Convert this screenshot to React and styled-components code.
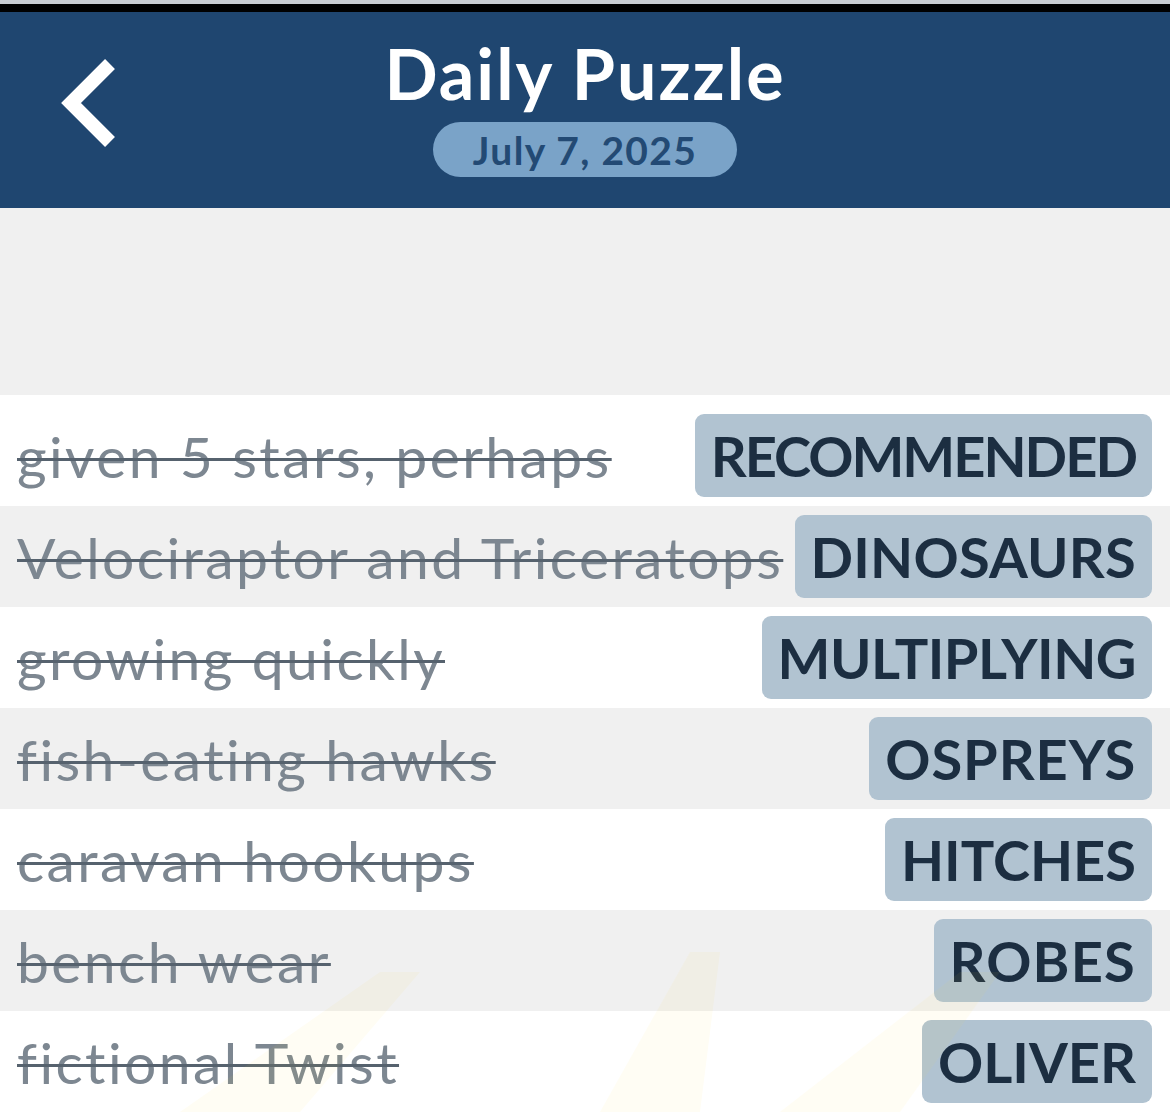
import React from 'react';
import styled, { createGlobalStyle } from 'styled-components';

const GlobalStyle = createGlobalStyle`
    body {
        margin: 0;
        background: #f0f0f0;
        font-family: "Lato", "Noto Sans", sans-serif;
    }
`;

const Page = styled.div`
    position: relative;
    width: 1170px;
    height: 1112px;
    overflow: hidden;
    background: #f0f0f0;
`;

const StatusStrip = styled.div`
    height: 4px;
    background: #c9cdd2;
    border-bottom: 8px solid #000000;
`;

const Header = styled.header`
    position: relative;
    height: 196px;
    background: #1f4670;
    display: flex;
    flex-direction: column;
    align-items: center;
`;

const BackButton = styled.button`
    position: absolute;
    left: 56px;
    top: 40px;
    width: 66px;
    height: 102px;
    padding: 0;
    border: none;
    background: none;
    cursor: pointer;
`;

const Title = styled.h1`
    margin: 24px 0 0;
    font-size: 70px;
    line-height: 74px;
    font-weight: 700;
    color: #ffffff;
    letter-spacing: 2px;
`;

const DatePill = styled.div`
    margin-top: 12px;
    width: 304px;
    height: 55px;
    border-radius: 28px;
    background: #7aa3c8;
    color: #234a74;
    font-size: 39px;
    font-weight: 700;
    letter-spacing: 1.3px;
    display: flex;
    align-items: center;
    justify-content: center;
`;

const Spacer = styled.div`
    height: 187px;
`;

const List = styled.ul`
    margin: 0;
    padding: 0;
    list-style: none;
`;

const Row = styled.li`
    display: flex;
    align-items: center;
    justify-content: space-between;
    gap: 10px;
    padding: ${p => (p.$first ? '19px' : '9px')} 18px 9px 17px;
    background: ${p => (p.$shaded ? '#f0f0f0' : '#ffffff')};
`;

const Clue = styled.span`
    font-size: 57px;
    font-weight: 400;
    letter-spacing: 2.4px;
    font-variant-ligatures: none;
    color: #7d8791;
    white-space: nowrap;
    text-decoration: line-through;
    text-decoration-color: #56626e;
    text-decoration-thickness: 3px;
`;

const Answer = styled.span`
    flex-shrink: 0;
    height: 83px;
    padding: 0 16px;
    border-radius: 9px;
    background: #b1c3d1;
    color: #1c2e41;
    font-size: 56px;
    font-weight: 700;
    letter-spacing: ${p => p.$spacing || '0'};
    display: flex;
    align-items: center;
`;

const Glow = styled.svg`
    position: absolute;
    left: 0;
    bottom: 0;
    pointer-events: none;
`;

const entries = [
    ['given 5 stars, perhaps', 'RECOMMENDED', '-2px'],
    ['Velociraptor and Triceratops', 'DINOSAURS', '0.2px'],
    ['growing quickly', 'MULTIPLYING', '-0.5px'],
    ['fish-eating hawks', 'OSPREYS', '0.9px'],
    ['caravan hookups', 'HITCHES'],
    ['bench wear', 'ROBES', '1.2px'],
    ['fictional Twist', 'OLIVER'],
];

function App() {
    return (
        <Page>
            <GlobalStyle />
            <StatusStrip />
            <Header>
                <BackButton aria-label="Back">
                    <svg width="66" height="102" viewBox="0 0 66 102">
                        <path d="M54 12 L15 51 L54 90" fill="none" stroke="#ffffff" strokeWidth="14" strokeLinecap="butt" strokeLinejoin="miter" />
                    </svg>
                </BackButton>
                <Title>Daily Puzzle</Title>
                <DatePill>July 7, 2025</DatePill>
            </Header>
            <Spacer />
            <List>
                {entries.map(([clue, answer, spacing], i) => (
                    <Row key={answer} $first={i === 0} $shaded={i % 2 === 1}>
                        <Clue>{clue}</Clue>
                        <Answer $spacing={spacing}>{answer}</Answer>
                    </Row>
                ))}
            </List>
            <Glow width="1170" height="200" viewBox="0 0 1170 200">
                <g fill="#ffd54a" opacity="0.06">
                    <polygon points="180,200 300,200 420,60 380,60" />
                    <polygon points="600,200 700,200 720,40 690,40" />
                    <polygon points="780,200 900,200 1000,60 960,60" />
                </g>
            </Glow>
        </Page>
    );
}

export default App;
